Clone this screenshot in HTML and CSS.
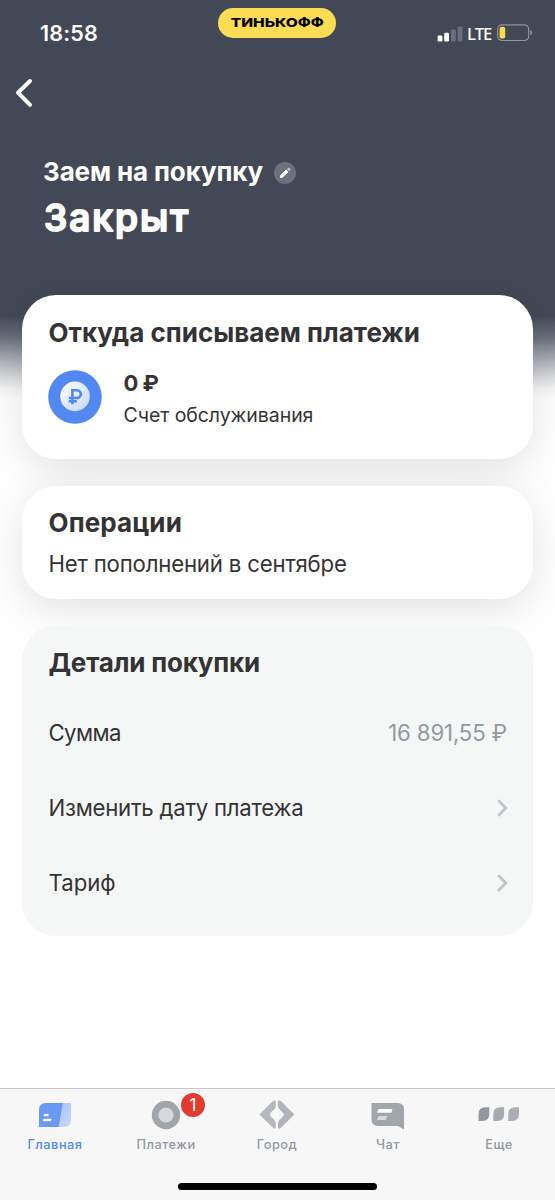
FILE: index.html
```html
<!DOCTYPE html>
<html lang="ru">
<head>
<meta charset="utf-8">
<title>Заем на покупку</title>
<link rel="stylesheet" href="styles.css">
</head>
<body>
<div class="screen">
  <header class="hero">
    <div class="status">
      <span class="time">18:58</span>
      <span class="pill"><span class="pill-text">ТИНЬКОФФ</span></span>
      <span class="indicators">
        <svg class="signal" width="26" height="16" viewBox="0 0 26 16"><rect x=".6" y="9.5" width="4.8" height="6" rx="1.2" fill="#fff"/><rect x="7.2" y="6.7" width="4.8" height="8.8" rx="1.2" fill="#fff"/><rect x="14" y="3.6" width="4.8" height="11.9" rx="1.2" fill="#6b6f7a"/><rect x="20.7" y=".4" width="4.8" height="15.1" rx="1.2" fill="#6b6f7a"/></svg>
        <span class="lte">LTE</span>
        <svg class="battery" width="36" height="18" viewBox="0 0 36 18"><rect x=".7" y=".9" width="31" height="15.6" rx="4.4" fill="none" stroke="#8f929b" stroke-width="1.2"/><rect x="2.6" y="2.8" width="5.6" height="11.8" rx="2" fill="#fbdc4b"/><path d="M33.4 6v5.4q1.8-.9 1.8-2.7t-1.8-2.7z" fill="#8f929b"/></svg>
      </span>
    </div>
    <svg class="back" width="18" height="30" viewBox="0 0 18 30"><path d="M15 3 3 14.6 15 26.8" fill="none" stroke="#fff" stroke-width="4" stroke-linecap="round" stroke-linejoin="round"/></svg>
    <div class="title-row">
      <h1 class="title">Заем на покупку</h1>
      <svg class="edit" width="22" height="22" viewBox="0 0 22 22"><circle cx="11" cy="11" r="11" fill="#6d717c"/><path d="M6.400 15.500 6.800 13.400 12.200 8 14.100 9.900 8.600 15.100z" fill="#fff" stroke="#fff" stroke-width="1" stroke-linejoin="round"/><path d="M13 7.100 14.200 6q.7-.6 1.400.1l.5.5q.6.700 0 1.400L15 9.100z" fill="#c4c6cb"/></svg>
    </div>
    <svg class="state" width="180" height="50" viewBox="0 0 180 50"><text class="state-text" x="1" y="36.700" textLength="144">Закрыт</text></svg>
  </header>

  <main class="cards">
    <section class="card source">
      <h2 class="heading h-source">Откуда списываем платежи</h2>
      <div class="account">
        <svg class="coin" width="54" height="54" viewBox="0 0 54 54"><defs><linearGradient id="coin" x1="0" y1="0" x2="1" y2="1"><stop offset="0" stop-color="#fff"/><stop offset="1" stop-color="#c4d6fb"/></linearGradient></defs><circle cx="27" cy="27" r="26.8" fill="#5288f1"/><circle cx="27" cy="26.4" r="14.8" fill="url(#coin)"/><path d="M24.400 34.200V20.200h4.500a3.900 3.900 0 0 1 0 7.800h-8.200M20.700 31.200h8.200" fill="none" stroke="#5288f1" stroke-width="2.600"/></svg>
        <div class="account-text">
          <div class="amount">0 ₽</div>
          <div class="account-name">Счет обслуживания</div>
        </div>
      </div>
    </section>
    <section class="card operations">
      <h2 class="heading h-ops">Операции</h2>
      <p class="text empty">Нет пополнений в сентябре</p>
    </section>
    <section class="card details">
      <h2 class="heading h-details">Детали покупки</h2>
      <div class="row"><span class="text r-sum">Сумма</span><span class="value">16 891,55 ₽</span></div>
      <div class="row"><span class="text r-date">Изменить дату платежа</span><svg class="chevron" width="11" height="18" viewBox="0 0 11 18"><path d="M2 2 8.8 9 2 16" fill="none" stroke="#c1c3ca" stroke-width="2.8" stroke-linecap="round" stroke-linejoin="round"/></svg></div>
      <div class="row"><span class="text r-tariff">Тариф</span><svg class="chevron" width="11" height="18" viewBox="0 0 11 18"><path d="M2 2 8.8 9 2 16" fill="none" stroke="#c1c3ca" stroke-width="2.8" stroke-linecap="round" stroke-linejoin="round"/></svg></div>
    </section>
  </main>

  <footer class="tabbar">
    <nav class="tabs">
      <div class="tab active">
        <svg width="44" height="36" viewBox="0 0 44 36"><defs><linearGradient id="home" x1="0" y1="0" x2="1" y2="1"><stop offset="0" stop-color="#a1bef7"/><stop offset="1" stop-color="#c9dafb"/></linearGradient></defs><path d="M24 8H38V25q0 7-7 7H20z" fill="url(#home)"/><path d="M13 8H29.8L25.6 32H6V15q0-7 7-7z" fill="#6a98f2"/><path d="M11.600 19h4l-.5 2h-4.300zM10.600 23.900h7.800l-.7 2h-7.600z" fill="#fff" stroke="#fff" stroke-width=".4" stroke-linejoin="round"/></svg>
        <span class="label">Главная</span>
      </div>
      <div class="tab">
        <svg width="44" height="36" viewBox="0 0 44 36"><circle cx="22" cy="20" r="14.2" fill="#a1a5ac"/><circle cx="22" cy="20" r="7.6" fill="#d6d8db"/></svg>
        <span class="label">Платежи</span>
        <span class="badge">1</span>
      </div>
      <div class="tab">
        <svg width="44" height="36" viewBox="0 0 44 36"><path d="M4.4 19.6 18 6.1q2.8-2.3 2.8 1.2v3.4q0 2-1.6 3.6l-3.4 3.4q-1.9 1.9 0 3.8l3.4 3.2q1.6 1.6 1.6 3.6v3.2q0 3.6-2.8 1.2z" fill="#b5b8be"/><path d="M39.4 19.6 25.8 6.1Q23 3.8 23 7.3v3.4q0 2 1.6 3.6l3.4 3.4q1.9 1.9 0 3.8l-3.4 3.2Q23 26.3 23 28.3v3.2q0 3.6 2.8 1.2z" fill="#b0b3b9"/></svg>
        <span class="label">Город</span>
      </div>
      <div class="tab">
        <svg width="44" height="36" viewBox="0 0 44 36"><path d="M5.500 8H31.500q6.500 0 6.500 6.500V34.400L32 31H12Q5.500 31 5.500 24.500z" fill="#a1a5ac"/><path d="M13.800 14H26.500l-1.200 3.800H11.300q0-3.800 2.500-3.800z" fill="#fff"/><path d="M13.800 21H21l-1.200 4H11.300q0-4 2.500-4z" fill="#dadbde"/></svg>
        <span class="label">Чат</span>
      </div>
      <div class="tab">
        <svg width="44" height="36" viewBox="0 0 44 36"><path d="M8.500 12.300H12.300V19q0 7-7 7H1.500V19.300q0-7 7-7z" fill="#9297a0"/><path d="M23.300 12.300H27.100V19q0 7-7 7H16.300V19.300q0-7 7-7z" fill="#a6aab1"/><path d="M38.200 12.300H42V19q0 7-7 7H31.200V19.300q0-7 7-7z" fill="#abaeb5"/></svg>
        <span class="label">Еще</span>
      </div>
    </nav>
    <div class="home-indicator"></div>
  </footer>
</div>
</body>
</html>
```
FILE: styles.css
```css
* { box-sizing: border-box; margin: 0; padding: 0; }
body { width: 555px; height: 1200px; overflow: hidden; background: #fff; font-family: Inter, "Noto Sans", sans-serif; color: #333; }
svg { display: block; flex: none; }
span, h1, h2, p { white-space: nowrap; }
.screen { height: 1200px; display: flex; flex-direction: column; background: linear-gradient(#434856 0, #434856 305px, #454a58 316px, #6c707c 338px, #b4b7bd 363px, #f4f4f5 388px, #fff 400px); }

.hero { height: 294.500px; flex: none; color: #fff; }
.status { height: 78px; padding: 8px 22px 0 40px; display: grid; grid-template-columns: 178px 118px 1fr; }
.time { font-size: 21.500px; line-height: 26px; font-weight: 600; letter-spacing: .2px; margin-top: 12px; }
.pill { height: 29.500px; border-radius: 15px; background: #fbdc54; display: flex; align-items: center; justify-content: center; color: #000; }
.pill-text { font-size: 12.400px; font-weight: 800; transform: scaleX(1.250); }
.indicators { display: flex; justify-content: flex-end; align-items: flex-start; padding-top: 17px; }
.signal { margin: .5px 4px 0 0; }
.lte { width: 25px; margin: -1px 5px 0 0; font-family: "Noto Sans", sans-serif; font-size: 16.800px; line-height: 20px; font-weight: 500; letter-spacing: -1px; }
.battery { margin-top: -1px; }
.back { margin: 0 0 0 15px; }
.title-row { display: flex; align-items: center; gap: 11px; height: 32px; margin: 47.500px 0 0 43px; }
.title { font-size: 26px; line-height: 32px; font-weight: 700; letter-spacing: -.130px; }
.edit { margin-top: 3px; }
.state { margin: 6px 0 0 43px; overflow: visible; }
.state-text { font-size: 37.200px; font-weight: 500; fill: #fff; stroke: #fff; stroke-width: 2px; stroke-linejoin: round; }

.cards { padding: 0 22px; flex: 1; display: flex; flex-direction: column; gap: 27.500px; }
.card { border-radius: 34px; padding: 20.500px 26px 0 26.500px; background: #fff; flex: none; }
.source { height: 164px; padding-top: 22px; box-shadow: 0 10px 44px rgba(0, 0, 0, .12); }
.operations { height: 112.500px; box-shadow: 0 10px 44px rgba(0, 0, 0, .12); position: relative; }
.details { height: 310px; background: #f5f7f7; position: relative; }
.heading { font-size: 26px; line-height: 32px; font-weight: 700; }
.h-ops { letter-spacing: .100px; }
.account { display: flex; gap: 21.500px; align-items: flex-start; margin-top: 18.500px; }
.coin { margin: 2.500px 0 0 -.500px; }
.amount { font-size: 22px; line-height: 32px; font-weight: 700; letter-spacing: -.500px; }
.account-name { font-size: 19.500px; line-height: 32px; letter-spacing: -.060px; }
.text { font-size: 22.200px; line-height: 32px; letter-spacing: -.250px; }
.empty { margin-top: 9px; letter-spacing: -.190px; }
.h-details { margin-bottom: 16.500px; letter-spacing: -.200px; }
.r-sum { letter-spacing: -.600px; }
.r-tariff { letter-spacing: 0; }
.row { height: 75px; display: flex; align-items: center; justify-content: space-between; }
.value { font-size: 22.200px; letter-spacing: -.150px; color: #9299a2; }
.chevron { margin-right: -1px; }

.tabbar { height: 112px; flex: none; background: #f7f7f7; border-top: 1px solid #c6c6c8; }
.tabs { display: grid; grid-template-columns: repeat(5, 1fr); height: 94px; padding: 6px 1px 0 0; margin-left: -1px; }
.tab { display: flex; flex-direction: column; align-items: center; position: relative; color: #9299a2; }
.active { color: #5288f1; }
.label { font-size: 12.800px; line-height: 18px; font-weight: 500; letter-spacing: .500px; margin-top: 5px; padding-left: 1px; }
.badge { position: absolute; left: 71px; top: -2px; width: 24px; height: 24px; border-radius: 50%; background: #e23b30; color: #fff; font-size: 17px; line-height: 24px; text-align: center; }
.home-indicator { width: 199px; height: 7px; border-radius: 4px; background: #000; margin: 0 auto; }
```
